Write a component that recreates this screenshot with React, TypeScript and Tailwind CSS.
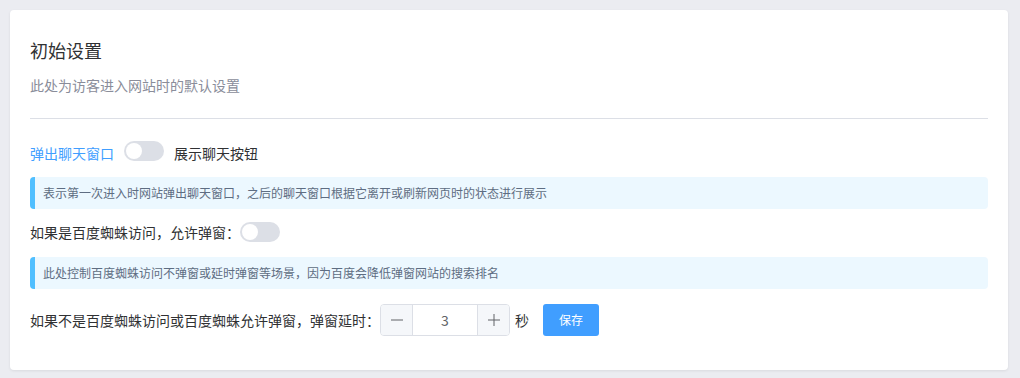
import React, { useState } from "react";

const font = { fontFamily: '"Noto Sans CJK SC", "Noto Sans", sans-serif' };

function Toggle({ on, onChange }: { on: boolean; onChange: (v: boolean) => void }) {
  return (
    <button
      type="button"
      onClick={() => onChange(!on)}
      className={`relative inline-block h-[20px] w-[40px] shrink-0 rounded-full transition-colors ${on ? "bg-[#409eff]" : "bg-[#dcdfe6]"}`}
    >
      <span
        className={`absolute top-[2px] h-[16px] w-[16px] rounded-full bg-white transition-all ${on ? "left-[22px]" : "left-[2px]"}`}
      />
    </button>
  );
}

function Tip({ children }: { children: React.ReactNode }) {
  return (
    <div className="flex h-[32px] items-center rounded-[4px] border-l-[5px] border-[#50bfff] bg-[#ecf8ff] pl-[8px] text-[12px] text-[#5e6d82]">
      {children}
    </div>
  );
}

export default function App() {
  const [popup, setPopup] = useState(false);
  const [spider, setSpider] = useState(false);
  const [delay, setDelay] = useState(3);

  return (
    <div className="min-h-[378px] w-full bg-[#ebecf1] p-[10px] pr-[12px]" style={font}>
      <div className="rounded-[4px] bg-white px-[20px] pb-[34px] pt-[28px] shadow-[0_1px_3px_rgba(0,0,0,0.08)]">
        {/* header */}
        <h2 className="text-[18px] leading-[24px] text-[#303133]">初始设置</h2>
        <p className="mt-[13px] text-[14px] leading-[20px] text-[#8a8d9a]">此处为访客进入网站时的默认设置</p>
        <div className="mt-[23px] h-px bg-[#dcdfe6]" />

        <div className="mt-[18px] flex h-[32px] items-center text-[14px]">
          <span className="text-[#409eff]">弹出聊天窗口</span>
          <span className="ml-[10px]">
            <Toggle on={popup} onChange={setPopup} />
          </span>
          <span className="ml-[10px] text-[#303133]">展示聊天按钮</span>
        </div>

        <div className="mt-[8px]">
          <Tip>表示第一次进入时网站弹出聊天窗口，之后的聊天窗口根据它离开或刷新网页时的状态进行展示</Tip>
        </div>

        <div className="mt-[7px] flex h-[32px] items-center text-[14px] text-[#303133]">
          <span>如果是百度蜘蛛访问，允许弹窗：</span>
          <Toggle on={spider} onChange={setSpider} />
        </div>

        <div className="mt-[9px]">
          <Tip>此处控制百度蜘蛛访问不弹窗或延时弹窗等场景，因为百度会降低弹窗网站的搜索排名</Tip>
        </div>

        <div className="mt-[15px] flex h-[32px] items-center text-[14px] text-[#303133]">
          <span>如果不是百度蜘蛛访问或百度蜘蛛允许弹窗，弹窗延时：</span>
          <div className="flex h-[32px] w-[130px] overflow-hidden rounded-[4px] border border-[#dcdfe6]">
            <button
              type="button"
              onClick={() => setDelay(Math.max(0, delay - 1))}
              className="flex w-[32px] items-center justify-center border-r border-[#dcdfe6] bg-[#f5f7fa] text-[#606266]"
            >
              <svg width="12" height="12" viewBox="0 0 12 12">
                <path d="M0 6h12" stroke="currentColor" strokeWidth="1" />
              </svg>
            </button>
            <div className="flex flex-1 items-center justify-center text-[14px] text-[#606266]">{delay}</div>
            <button
              type="button"
              onClick={() => setDelay(delay + 1)}
              className="flex w-[32px] items-center justify-center border-l border-[#dcdfe6] bg-[#f5f7fa] text-[#606266]"
            >
              <svg width="12" height="12" viewBox="0 0 12 12">
                <path d="M0 6h12M6 0v12" stroke="currentColor" strokeWidth="1" />
              </svg>
            </button>
          </div>
          <span className="ml-[5px]">秒</span>
          <button
            type="button"
            className="ml-[14px] h-[32px] w-[56px] rounded-[3px] bg-[#409eff] text-[12px] text-white"
          >
            保存
          </button>
        </div>
      </div>
    </div>
  );
}
